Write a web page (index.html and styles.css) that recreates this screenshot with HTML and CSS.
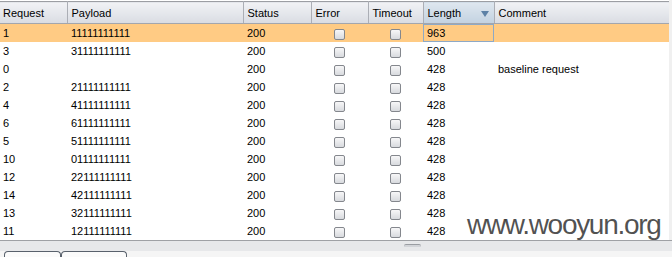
FILE: index.html
```html
<!DOCTYPE html>
<html lang="en">
<head>
  <meta charset="UTF-8">
  <title>Intruder results</title>
  <link rel="stylesheet" href="styles.css">
</head>
<body>

<div class="results">
  <table class="grid">
    <colgroup>
      <col class="c-req"><col class="c-pay"><col class="c-status"><col class="c-err">
      <col class="c-time"><col class="c-len"><col class="c-comment">
    </colgroup>
    <thead>
      <tr>
        <th>Request</th>
        <th>Payload</th>
        <th>Status</th>
        <th>Error</th>
        <th>Timeout</th>
        <th class="sorted">Length <svg class="arrow" width="8" height="6" viewBox="0 0 8 6"><path d="M0 0H8L4 6Z"/></svg></th>
        <th>Comment</th>
      </tr>
    </thead>
    <tbody>
      <tr class="selected"><td>1</td><td>11111111111</td><td>200</td><td class="box"><span class="check"></span></td><td class="box"><span class="check"></span></td><td class="focus">963</td><td></td></tr>
      <tr><td>3</td><td>31111111111</td><td>200</td><td class="box"><span class="check"></span></td><td class="box"><span class="check"></span></td><td>500</td><td></td></tr>
      <tr><td>0</td><td></td><td>200</td><td class="box"><span class="check"></span></td><td class="box"><span class="check"></span></td><td>428</td><td>baseline request</td></tr>
      <tr><td>2</td><td>21111111111</td><td>200</td><td class="box"><span class="check"></span></td><td class="box"><span class="check"></span></td><td>428</td><td></td></tr>
      <tr><td>4</td><td>41111111111</td><td>200</td><td class="box"><span class="check"></span></td><td class="box"><span class="check"></span></td><td>428</td><td></td></tr>
      <tr><td>6</td><td>61111111111</td><td>200</td><td class="box"><span class="check"></span></td><td class="box"><span class="check"></span></td><td>428</td><td></td></tr>
      <tr><td>5</td><td>51111111111</td><td>200</td><td class="box"><span class="check"></span></td><td class="box"><span class="check"></span></td><td>428</td><td></td></tr>
      <tr><td>10</td><td>01111111111</td><td>200</td><td class="box"><span class="check"></span></td><td class="box"><span class="check"></span></td><td>428</td><td></td></tr>
      <tr><td>12</td><td>22111111111</td><td>200</td><td class="box"><span class="check"></span></td><td class="box"><span class="check"></span></td><td>428</td><td></td></tr>
      <tr><td>14</td><td>42111111111</td><td>200</td><td class="box"><span class="check"></span></td><td class="box"><span class="check"></span></td><td>428</td><td></td></tr>
      <tr><td>13</td><td>32111111111</td><td>200</td><td class="box"><span class="check"></span></td><td class="box"><span class="check"></span></td><td>428</td><td></td></tr>
      <tr><td>11</td><td>12111111111</td><td>200</td><td class="box"><span class="check"></span></td><td class="box"><span class="check"></span></td><td>428</td><td></td></tr>
    </tbody>
  </table>
</div>

<!-- divider between table and request/response tabs -->
<div class="splitter"><span class="grip"></span></div>

<div class="tabs">
  <span class="tab first"></span>
  <span class="tab second"></span>
</div>

<div class="watermark">www.wooyun.org</div>

</body>
</html>
```

FILE: styles.css
```css
* {
  box-sizing: border-box;
}
body {
  margin: 0;
  width: 672px;
  height: 257px;
  overflow: hidden;
  background-color: #f0f0f0;
  font-family: "Liberation Sans", Arial, sans-serif;
  font-size: 11px;
  color: #000;
  position: relative;
}
.results {
  width: 669px;
  height: 240px;
  padding-top: 1px;
  background-color: #fff;
  overflow: hidden;
}
.grid {
  width: 669px;
  table-layout: fixed;
  border-collapse: collapse;
}
.c-req { width: 67px; }
.c-pay { width: 176px; }
.c-status { width: 68px; }
.c-err { width: 57px; }
.c-time { width: 55px; }
.c-len { width: 71px; }
.c-comment { width: 175px; }

.grid th {
  height: 22px;
  padding: 0 4px;
  text-align: left;
  font-weight: normal;
  white-space: nowrap;
  background: linear-gradient(#f1f2f5, #e4e6eb 55%, #d9dce2);
  border-top: 1px solid #9c9ea3;
  border-bottom: 1px solid #a3a6ad;
  border-right: 1px solid #abaeb5;
}
.grid th:first-child {
  padding-left: 3px;
}
.grid th.sorted {
  background: linear-gradient(#dfe7ef, #cfdbe7 55%, #c3d2e1);
  position: relative;
}
.arrow {
  position: absolute;
  right: 5px;
  top: 9px;
  fill: #5d81a6;
}
.grid td {
  height: 18px;
  padding: 0 4px;
  white-space: nowrap;
  overflow: hidden;
}
.grid td:first-child {
  padding-left: 3px;
}
.grid tr.selected td {
  background-color: #ffcb84;
}
.grid td.focus {
  box-shadow: inset 0 0 0 1px #8ea9c6;
}
.grid td.box {
  text-align: center;
  padding: 0;
}
.check {
  display: inline-block;
  width: 11px;
  height: 11px;
  margin-top: 3px;
  vertical-align: top;
  border: 1px solid #84878d;
  border-radius: 2px;
  background: linear-gradient(#f7f7f8, #d8dade);
}

.splitter {
  height: 11px;
  border-top: 1px solid #9fa1a5;
  background-color: #e7e8ea;
  padding-top: 3px;
  padding-left: 404px;
}
.grip {
  display: block;
  width: 17px;
  height: 3px;
  border-top: 1px solid #9a9da2;
  border-radius: 2px 2px 0 0;
  background-color: #d2d4d8;
}
.tabs {
  display: flex;
  padding-left: 4px;
  height: 6px;
  background-color: #f5f5f5;
}
.tab {
  height: 8px;
  border: 1px solid #59616c;
  border-bottom: none;
  border-radius: 4px 4px 0 0;
  background-color: #fbfbfb;
}
.tab.first { width: 57px; }
.tab.second { width: 66px; }

.watermark {
  position: absolute;
  left: 467px;
  top: 209px;
  font-family: "Liberation Sans", Arial, sans-serif;
  font-size: 28px;
  letter-spacing: -1.3px;
  color: rgba(50, 50, 50, 0.85);
}
```
